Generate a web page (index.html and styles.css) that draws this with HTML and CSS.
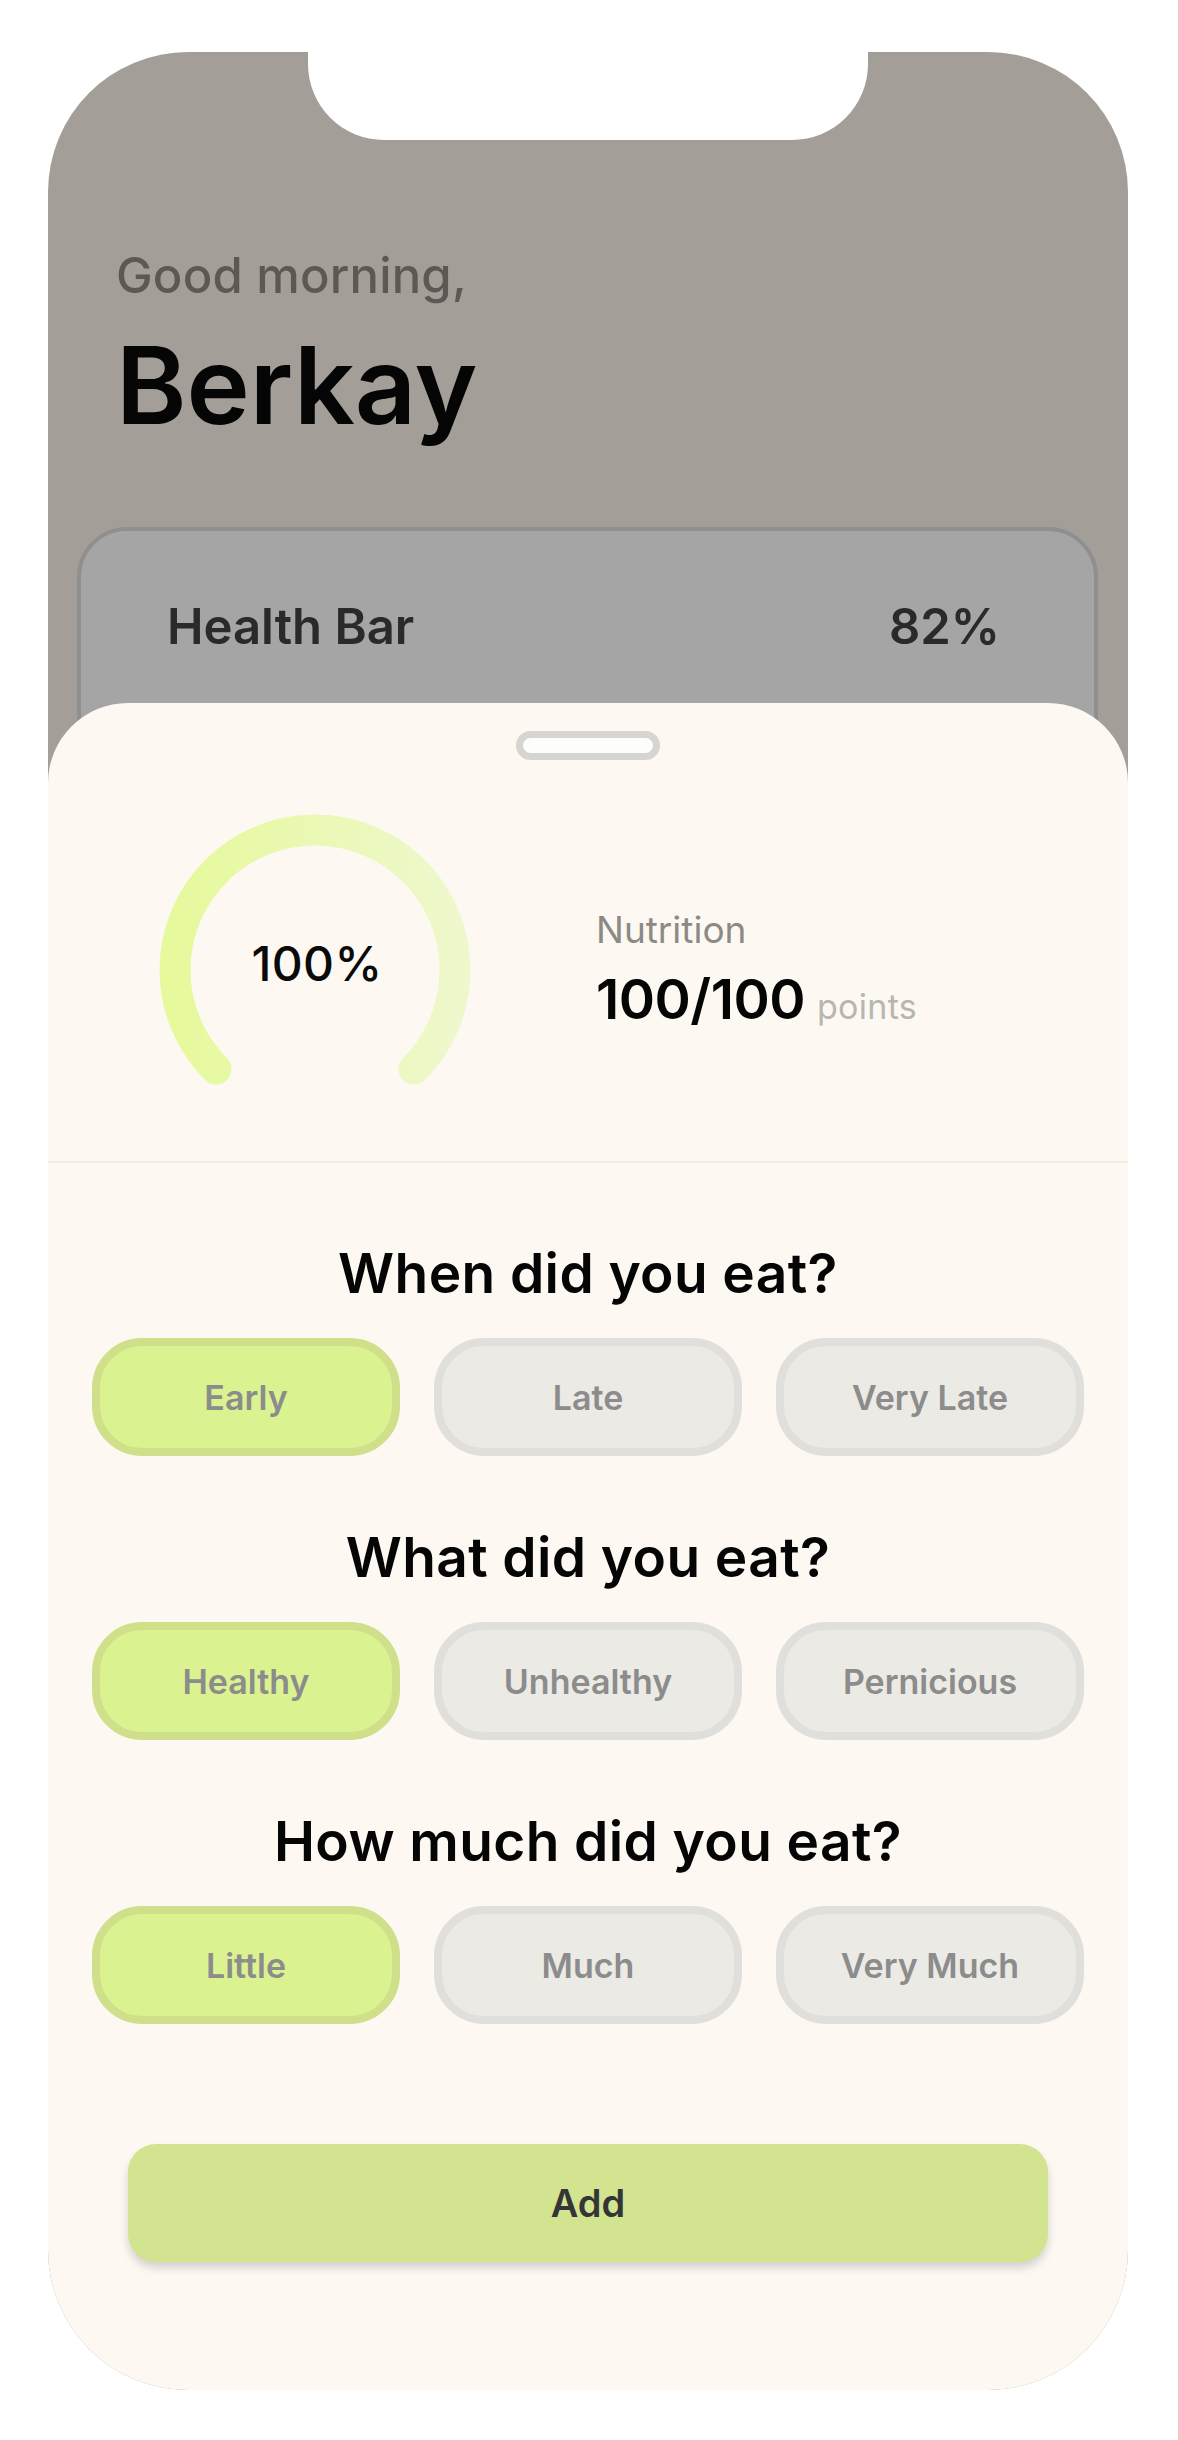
FILE: index.html
```html
<!DOCTYPE html>
<html lang="en">
<head>
<meta charset="utf-8">
<title>Nutrition</title>
<link rel="stylesheet" href="styles.css">
</head>
<body>
<div class="phone">
  <div class="notch"></div>
  <header class="header">
    <p class="greeting">Good morning,</p>
    <h1 class="name">Berkay</h1>
  </header>
  <section class="health-card">
    <span class="health-label">Health Bar</span>
    <span class="health-value">82%</span>
  </section>

  <section class="sheet">
    <div class="handle"></div>
    <div class="stats">
      <div class="gauge">
        <svg class="gauge-svg" width="320" height="290" viewBox="0 0 320 290">
          <defs>
            <linearGradient id="g" x1="0" y1="0" x2="1" y2="0">
              <stop offset="0" stop-color="#e6f99c"/>
              <stop offset="1" stop-color="#eef8cc"/>
            </linearGradient>
          </defs>
          <path d="M 61 259 A 140 140 0 1 1 259 259" fill="none" stroke="url(#g)" stroke-width="31" stroke-linecap="round"/>
        </svg>
        <span class="gauge-text">100%</span>
      </div>
      <div class="nutrition">
        <div class="nutrition-label">Nutrition</div>
        <div class="nutrition-value">100/100<span class="points">points</span></div>
      </div>
    </div>

    <div class="questions">
      <h2 class="question">When did you eat?</h2>
      <div class="options">
        <button class="option active">Early</button>
        <button class="option">Late</button>
        <button class="option">Very Late</button>
      </div>
      <h2 class="question">What did you eat?</h2>
      <div class="options">
        <button class="option active">Healthy</button>
        <button class="option">Unhealthy</button>
        <button class="option">Pernicious</button>
      </div>
      <h2 class="question">How much did you eat?</h2>
      <div class="options">
        <button class="option active">Little</button>
        <button class="option">Much</button>
        <button class="option">Very Much</button>
      </div>
      <button class="add">Add</button>
    </div>
  </section>
</div>
</body>
</html>
```

FILE: styles.css
```css
* { box-sizing: border-box; }
html, body { margin: 0; padding: 0; background: #ffffff; }
body { font-family: Inter, "Noto Sans", sans-serif; }

.phone {
  position: relative;
  width: 1080px;
  height: 2338px;
  margin: 52px 0 0 48px;
  border-radius: 140px;
  background: #a39f98;
  overflow: hidden;
}

.notch {
  position: absolute;
  top: 0;
  left: 260px;
  width: 560px;
  height: 88px;
  background: #ffffff;
  border-radius: 0 0 76px 76px;
}

.header { padding: 195px 0 0 68px; }
.greeting {
  margin: 0;
  font-size: 49px;
  line-height: 1.2;
  font-weight: 500;
  color: #5c5954;
  letter-spacing: 0.2px;
}
.name {
  margin: 15px 0 0;
  font-size: 107px;
  line-height: 1.2;
  font-weight: 600;
  color: #050505;
  letter-spacing: 0;
}

.health-card {
  margin: 78px 30px 0 29px;
  height: 330px;
  border: 4px solid #8f8f8f;
  border-radius: 50px;
  background: #a5a5a5;
  display: flex;
  justify-content: space-between;
  align-items: flex-start;
  padding: 67px 94px 0 86px;
  font-size: 49px;
  line-height: 1.2;
  font-weight: 600;
  color: #2a2a2a;
}

.sheet {
  position: absolute;
  top: 651px;
  left: 0;
  right: 0;
  bottom: 0;
  background: #fdf9f2;
  border-radius: 80px 80px 0 0;
  display: flex;
  flex-direction: column;
}

.handle {
  align-self: center;
  margin-top: 28px;
  width: 144px;
  height: 29px;
  border: 7px solid #d6d5d2;
  border-radius: 15px;
  background: #fdfdfc;
}

.stats {
  display: flex;
  align-items: flex-start;
  margin-top: 50px;
  padding: 0 0 61px 107px;
  border-bottom: 2px solid #f1ede4;
}

.gauge { display: grid; }
.gauge-svg { grid-area: 1 / 1; display: block; }
.gauge-text {
  grid-area: 1 / 1;
  justify-self: center;
  align-self: start;
  margin-top: 125px;
  margin-left: 4px;
  font-size: 48px;
  line-height: 1.2;
  font-weight: 500;
  color: #0a0a0a;
  letter-spacing: 0.3px;
}

.nutrition { margin: 98px 0 0 121px; }
.nutrition-label {
  font-size: 37px;
  line-height: 1.2;
  color: #8c8a86;
}
.nutrition-value {
  margin-top: 15px;
  font-size: 55px;
  line-height: 65px;
  font-weight: 600;
  color: #050505;
  letter-spacing: -0.5px;
}
.points {
  margin-left: 12px;
  font-size: 34px;
  font-weight: 400;
  color: #b8b6b1;
  letter-spacing: 0.3px;
}

.questions {
  display: flex;
  flex-direction: column;
  padding: 78px 44px 0;
}
.question {
  margin: 0 0 33px;
  text-align: center;
  font-size: 55px;
  line-height: 64px;
  font-weight: 600;
  color: #050505;
  letter-spacing: 0.4px;
}
.options {
  display: grid;
  grid-template-columns: repeat(3, 1fr);
  gap: 34px;
  margin-bottom: 69px;
}
.option {
  height: 118px;
  border: 8px solid #e0dfdc;
  border-radius: 50px;
  background: #ebeae5;
  font-family: Inter, "Noto Sans", sans-serif;
  font-size: 34px;
  font-weight: 600;
  color: #8c8c8c;
  padding: 0;
}
.option.active {
  border-color: #cfdf8a;
  background: #dbf290;
}

.add {
  align-self: center;
  margin-top: 51px;
  width: 920px;
  height: 118px;
  border: none;
  border-radius: 28px;
  background: #d3e490;
  box-shadow: 0 6px 8px rgba(0, 0, 0, 0.16);
  font-family: Inter, "Noto Sans", sans-serif;
  font-size: 38px;
  font-weight: 600;
  color: #353535;
}
```
